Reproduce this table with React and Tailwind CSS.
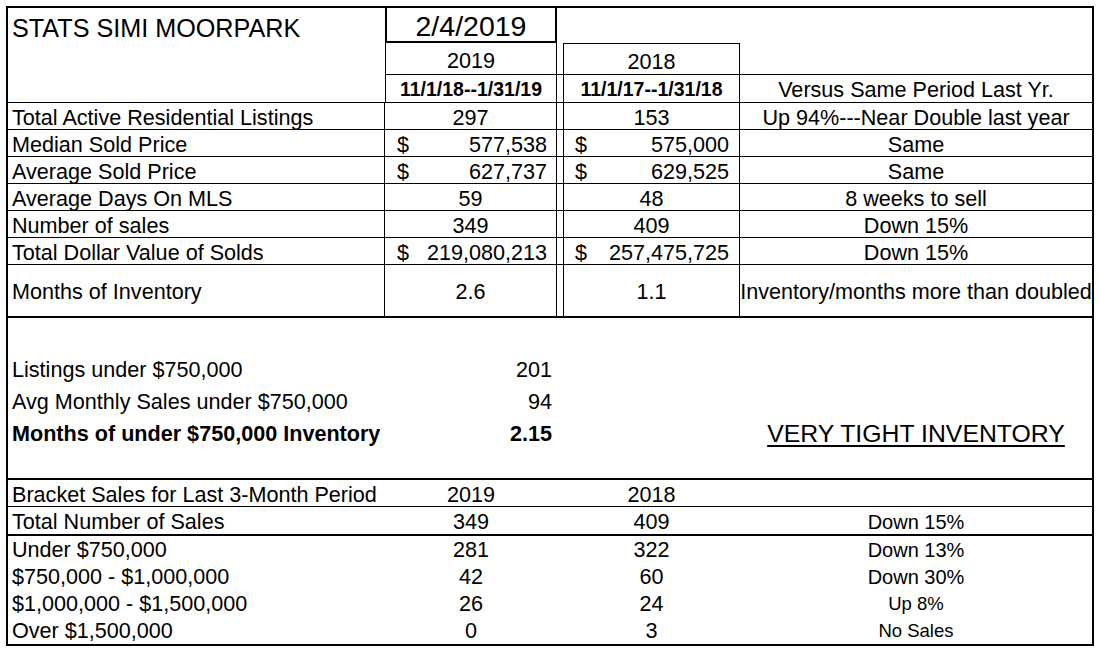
import React from 'react';

const cols = 'grid grid-cols-[377px_172px_6px_177px_1fr]';

const topRows = [
  { label: 'Total Active Residential Listings', a: '297', b: '153', v: 'Up 94%---Near Double last year' },
  { label: 'Median Sold Price', a: '577,538', b: '575,000', dollar: true, v: 'Same' },
  { label: 'Average Sold Price', a: '627,737', b: '629,525', dollar: true, v: 'Same' },
  { label: 'Average Days On MLS', a: '59', b: '48', v: '8 weeks to sell' },
  { label: 'Number of sales', a: '349', b: '409', v: 'Down 15%' },
  { label: 'Total Dollar Value of Solds', a: '219,080,213', b: '257,475,725', dollar: true, v: 'Down 15%' },
];

const brackets = [
  { label: 'Under $750,000', a: '281', b: '322', v: 'Down 13%', small: false },
  { label: '$750,000 - $1,000,000', a: '42', b: '60', v: 'Down 30%', small: false },
  { label: '$1,000,000 - $1,500,000', a: '26', b: '24', v: 'Up 8%', small: true },
  { label: 'Over $1,500,000', a: '0', b: '3', v: 'No Sales', small: true },
];

// value cell, either centered or "$ ...... 123" accounting style
const Money = ({ value, dollar, left, right }) =>
  dollar ? (
    <div className={`flex items-center justify-between ${left} ${right}`}>
      <span>$</span>
      <span>{value}</span>
    </div>
  ) : (
    <div className="flex items-center justify-center">{value}</div>
  );

const App = () => {
  return (
    <div className="w-[1100px] h-[653px] bg-white text-black font-['Liberation_Sans',Arial,sans-serif] text-[21.6px] leading-none">
      <div className="ml-[6px] mt-[6px] w-[1088px] border-2 border-black">
        {/* Top table */}
        <div className="border-b-2 border-black">
          {/* header block */}
          <div className={`${cols} grid-rows-[35px_32px_28px]`}>
            <div className="row-span-3 border-b border-black pl-1 pt-[8px] text-[25.2px]">STATS SIMI MOORPARK</div>
            <div className="flex items-center justify-center pt-[3px] border-l-2 border-r-2 border-b-2 border-black text-[28.5px]">2/4/2019</div>
            <div className="col-span-3"></div>

            <div className="flex items-center justify-center pt-[5px] border-l border-r border-b border-black">2019</div>
            <div className="border-b border-black"></div>
            <div className="flex items-center justify-center pt-[5px] border-t border-l border-r border-b border-black">2018</div>
            <div className="border-b border-black"></div>

            <div className="flex items-center justify-center pt-[2px] border-l border-r border-b border-black font-bold text-[19.5px]">11/1/18--1/31/19</div>
            <div className="border-b border-black"></div>
            <div className="flex items-center justify-center pt-[2px] border-l border-r border-b border-black font-bold text-[19.5px]">11/1/17--1/31/18</div>
            <div className="flex items-center justify-center pt-[2px] border-b border-black">Versus Same Period Last Yr.</div>
          </div>

          {topRows.map((r) => (
            <div key={r.label} className={`${cols} h-[27px] border-b border-black *:pt-[3px]`}>
              <div className="flex items-center pl-1 border-r border-black">{r.label}</div>
              <div className="flex border-r border-black *:flex-1">
                <Money value={r.a} dollar={r.dollar} left="pl-[12px]" right="pr-[9px]" />
              </div>
              <div></div>
              <div className="flex border-l border-r border-black *:flex-1">
                <Money value={r.b} dollar={r.dollar} left="pl-[11px]" right="pr-[10px]" />
              </div>
              <div className="flex items-center justify-center">{r.v}</div>
            </div>
          ))}

          <div className={`${cols} h-[51px] *:pt-[3px]`}>
            <div className="flex items-center pl-1 border-r border-black">Months of Inventory</div>
            <div className="flex items-center justify-center border-r border-black">2.6</div>
            <div></div>
            <div className="flex items-center justify-center border-l border-r border-black">1.1</div>
            <div className="flex items-center justify-center">Inventory/months more than doubled</div>
          </div>
        </div>

        {/* Under $750k summary */}
        <div className="h-[160px] pt-[36px]">
          <div className={`${cols} h-[32px]`}>
            <div className="flex items-center pl-1">Listings under $750,000</div>
            <div className="flex items-center justify-end pr-[5px]">201</div>
          </div>
          <div className={`${cols} h-[32px]`}>
            <div className="flex items-center pl-1">Avg Monthly Sales under $750,000</div>
            <div className="flex items-center justify-end pr-[5px]">94</div>
          </div>
          <div className={`${cols} h-[32px] font-bold`}>
            <div className="flex items-center pl-1">Months of under $750,000 Inventory</div>
            <div className="flex items-center justify-end pr-[5px]">2.15</div>
            <div></div>
            <div></div>
            <div className="flex items-center justify-center font-normal text-[24.8px]">
              <span className="underline decoration-[2px] underline-offset-[3px]">VERY TIGHT INVENTORY</span>
            </div>
          </div>
        </div>

        {/* Bracket sales */}
        <div className="border-t-2 border-black">
          <div className={`${cols} h-[27px] border-b border-black *:pt-[3px]`}>
            <div className="flex items-center pl-1">Bracket Sales for Last 3-Month Period</div>
            <div className="flex items-center justify-center">2019</div>
            <div></div>
            <div className="flex items-center justify-center">2018</div>
            <div></div>
          </div>
          <div className={`${cols} h-[29px] border-b-2 border-black *:pt-[3px]`}>
            <div className="flex items-center pl-1">Total Number of Sales</div>
            <div className="flex items-center justify-center">349</div>
            <div></div>
            <div className="flex items-center justify-center">409</div>
            <div className="flex items-center justify-center text-[20px]">Down 15%</div>
          </div>
          {brackets.map((r) => (
            <div key={r.label} className={`${cols} h-[27px] *:pt-[1px]`}>
              <div className="flex items-center pl-1">{r.label}</div>
              <div className="flex items-center justify-center">{r.a}</div>
              <div></div>
              <div className="flex items-center justify-center">{r.b}</div>
              <div className={`flex items-center justify-center ${r.small ? 'text-[18.5px]' : 'text-[20px]'}`}>{r.v}</div>
            </div>
          ))}
        </div>
      </div>
    </div>
  );
};

export default App;
